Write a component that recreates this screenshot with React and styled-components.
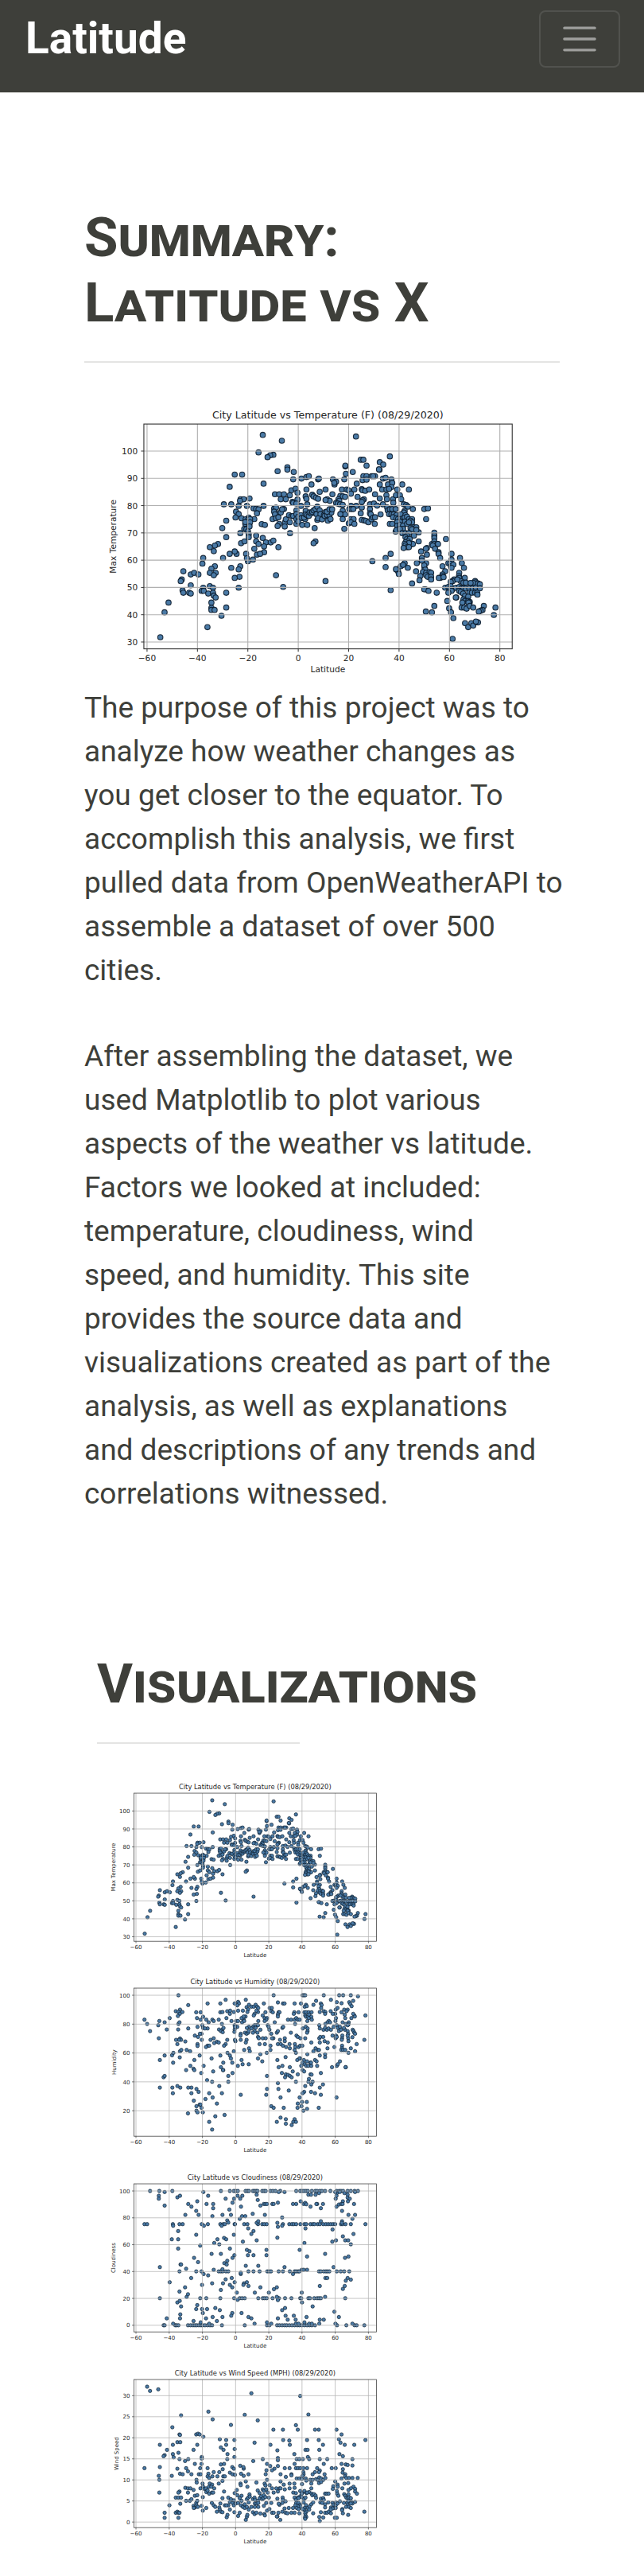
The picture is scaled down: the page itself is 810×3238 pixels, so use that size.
import React from "react";
import styled, { createGlobalStyle } from "styled-components";

const GlobalStyle = createGlobalStyle`
  * { box-sizing: border-box; }
  body {
    margin: 0;
    background: #fff;
    color: #3e3f3a;
    font-family: Roboto, "Liberation Sans", sans-serif;
    font-size: 37px;
    line-height: 55px;
  }
`;

const Navbar = styled.header`
  display: flex;
  align-items: flex-start;
  justify-content: space-between;
  padding: 13px 30px 31px 32px;
  background: #3e3f3a;
  border-bottom: 1px solid #dfdfdc;
`;

const Brand = styled.a`
  color: #fff;
  font-size: 55px;
  font-weight: 700;
  line-height: 70px;
  text-decoration: none;
`;

const Toggler = styled.button`
  display: flex;
  align-items: center;
  justify-content: center;
  width: 102px;
  height: 72px;
  padding: 0;
  background: transparent;
  border: 2px solid rgba(255, 255, 255, 0.1);
  border-radius: 8px;
  cursor: pointer;
`;

const Main = styled.main`
  padding: 141px 106px 34px;
`;

const Section = styled.section`
  margin-bottom: ${(p) => (p.$last ? 0 : 171)}px;
  padding-left: ${(p) => (p.$inset ? 16 : 0)}px;
`;

const Heading = styled.h1`
  margin: 0;
  font-size: 69px;
  font-weight: 700;
  font-variant: small-caps;
  line-height: 82px;
`;

const Rule = styled.hr`
  width: ${(p) => (p.$short ? "255px" : "auto")};
  max-width: 100%;
  height: 2px;
  margin: 32px 0 33px;
  border: 0;
  background: #e4e4e3;
`;

const Paragraph = styled.p`
  margin: 0 -6px ${(p) => (p.$last ? 0 : 53)}px 0;
`;

const Gallery = styled.div`
  display: flex;
  flex-direction: column;
  gap: 5px;
  width: 394px;
  max-width: 100%;
  margin-left: -3px;
`;

const ChartLink = styled.a`
  display: block;
  color: inherit;
`;

const Figure = styled.div`
  margin-bottom: 7px;
`;

const Plot = styled.svg`
  display: block;
  width: 100%;
  height: auto;
  font-family: "DejaVu Sans", sans-serif;
  fill: #262626;
`;

const pairs = (text) => text.trim().split(/\s+/).map((pair) => pair.split(",").map(Number));
const row = (y, xs) => xs.trim().split(/\s+/).map((x) => [Number(x), y]);

const WEST = pairs(`
485,81 557,103 469,147 525,156 513,158 503,165 578,203 578,212 541,218 602,221 379,231 407,231 360,277 488,265 600,249 631,246 650,240 659,237 694,249 697,246 669,268 593,290 609,284 650,287 616,299 700,296 722,287 531,305 547,305 565,305 587,309 553,324 572,324 647,313 650,322 672,307 677,313 686,318 694,322 616,325 597,334 600,338 612,340 338,343 366,343 394,349 401,324 413,324 435,321 399,330 425,349 488,349 629,349 653,343
384,371 394,380 382,393 347,405 332,433 347,467 450,358 460,360 469,362 463,377 453,399 432,393 405,396 420,400 430,401 437,399 419,417 434,420 415,436 423,437 429,445 400,452 432,456 432,467 419,410 437,411 435,427 481,418 493,421 588,452 681,433 684,483 677,490 528,359 535,356 528,371 541,380 531,381 553,374 565,361 558,362 522,399 535,396 544,392 547,417 541,425 569,411 572,400 568,427 587,411 584,384 594,388 600,387
612,366 612,380 612,399 619,390 629,384 631,395 634,421 653,421 612,417 619,408 645,399 641,393 647,368 647,381 653,384 659,387 662,374 669,377 672,372 677,366 684,361 688,380 691,352 700,366 703,380 691,402 694,396 709,400 716,384 722,372 719,387 728,384 731,405 737,384 741,399 744,374 728,371 737,362 747,362 728,324 738,330 722,327
403,490 416,483 460,461 460,483 469,493 485,470 497,487 515,487 525,480 490,502 544,505 453,511 490,524 463,533 475,530 448,552 429,558 422,530 425,547 386,530 379,521 360,530 335,546 316,493 304,499 285,505 300,520 260,546 257,567 304,577 291,586 366,583 400,577 394,589 397,617 379,621 307,602 285,602 300,611 185,596 213,608 226,602 242,608 179,627 175,633 213,649
182,668 185,677 207,677 213,680 260,658 254,670 262,670 285,652 297,658 279,680 297,677 300,688 307,695 347,677 394,658 129,714 114,751 98,845 276,807 291,714 291,734 291,742 303,742 347,733 329,764 535,611 562,655 722,633
`);

const EAST = pairs(`
147,87 275,162 165,175 175,175 187,197 237,184 250,193 236,213 234,211 107,200 107,197 135,221 109,228 103,249 60,249 66,268 72,257 65,262 150,265 175,237 187,237 206,237 219,237 212,237 172,252 187,250 249,246 259,243 281,249 237,268 268,268 284,262 322,268 281,278 347,287 303,287 94,287 112,287 119,290 141,287 128,303 169,286 172,290 182,292 197,287 246,287 262,287 272,285 58,305 88,311 97,313 106,315 81,324 84,330 153,315 219,305 237,321
177,324 172,328 169,334 262,309 264,324 287,324 298,309 313,309 318,324 288,337 200,343 215,340 227,348 249,343 328,343 337,346 343,352 72,338 78,340 87,343 97,345 128,349 148,349 169,355 122,361 130,361 137,361 200,361 165,377 200,377 203,381 240,381 97,367 94,381 106,381 97,399 88,380 128,399 138,399 120,415 128,411 141,417 103,436 169,402 178,404 185,406 194,411 206,400 212,393 219,392 218,417
265,355 267,366 275,362 284,361 297,361 331,368 328,374 362,361 405,361 419,358 412,399 272,380 281,381 290,381 300,384 316,381 334,384 287,392 300,396 306,399 316,399 325,396 331,393 340,390 347,399 359,399 353,405 359,411 322,408 331,409 313,409 303,411 275,417 284,417 303,424 313,421 325,424 340,417 347,411 366,430 375,430 353,433 359,437 325,436 297,446 300,440 313,436 384,449 375,440 322,452 334,452 347,452 340,461 366,461 334,467 340,474 350,474 343,483 334,487 359,493 362,493 384,483 347,490 331,493 334,499 340,505 347,505 327,508
443,450 443,461 443,470 487,474 434,493 443,483 443,493 455,493 457,493 437,499 446,511 459,524 459,530 465,546 415,508 411,511 393,521 415,533 396,546 278,530 259,546 259,580 209,558 377,565 412,565 396,556 331,565 316,577 325,572 343,583 300,590 306,596 298,588 309,606 374,596 406,583 405,574 409,590 400,599 412,602 425,599 431,602 412,611 418,617 431,617 431,627 390,614 387,630 359,642 278,667 409,664 405,664 421,670 452,677
508,530 508,552 540,546 496,565 503,567 506,577 515,571 508,583 547,565 555,583 474,577 484,596 474,608 474,614 465,621 460,621 478,618 537,602 536,614 537,621 558,621 518,627 512,633 505,636 543,633 553,639 562,639 530,627 597,633 599,638 590,640 608,642 615,645 580,640 484,658 496,655 505,652 512,664 503,664 525,658 537,655 545,660 553,660 562,661 575,660 588,660 600,658 615,660 508,670 496,677 537,670 543,674 552,680 575,677 585,677 597,677 605,677 606,684
526,695 524,695 559,689 571,692 553,702 559,708 549,714 571,708 577,712 575,717 572,714 492,708 546,733 556,733 565,737 577,727 590,733 630,727 625,742 618,745 611,748 674,733 668,761 499,736 506,751 515,773 443,727 411,748 434,751 559,792 571,807 583,792 590,801 603,788 608,789 600,786 512,851
`);

const TEMPERATURE_POINTS = [...WEST, ...EAST.map(([x, y]) => [x + 690, y])].map(([x, y]) => [
  562.5 + (x - 619) * 0.6576,
  167 + (y - 142) * 0.6574,
]);

const HUMIDITY_POINTS = pairs(`
347,127 706,127 815,127 820,127 825,127 895,127 953,127 968,127 997,127 1024,131 922,144 525,144 601,144 866,148 1006,148 457,158 505,158 384,164 353,181 337,187 347,190 362,190 352,197 345,205 314,213 347,235 351,229 346,256 303,256 295,229 275,224 271,240 219,219 229,235 240,262 273,289 384,252 414,191 431,191 417,213 431,219 440,208 452,219 461,229 419,246 437,240 440,250 457,252 447,252 409,279 434,272 428,272 421,284 435,295 475,219 480,224 499,219 511,235 528,213 505,191 513,190 531,187 541,197 542,185 556,190
547,224 559,240 565,224 572,224 559,158 572,152 575,158 569,165 572,185 590,185 604,172 613,163 610,180 622,170 631,170 638,163 644,170 648,175 600,207 593,219 587,229 595,224 585,213 593,207 634,197 631,203 647,190 641,185 607,190 669,158 722,154 741,158 747,158 785,158 809,158 828,163 823,170 831,168 856,163 884,158 887,164 944,153 962,157 991,153 995,160 1000,168 940,181 947,175 938,197 972,181 985,181 981,187 962,191 974,200 885,175 880,190 895,187 901,190 900,197 921,187 929,197
691,175 699,175 697,187 703,191 675,191 665,203 672,213 681,213 678,219 672,224 725,191 728,191 722,199 722,207 784,191 782,197 800,191 822,191 829,191 838,191 849,191 825,203 828,208 835,208 840,200 848,208 838,213 850,219 833,224 710,229 760,219 772,219 785,219 791,213 797,219 804,219 787,235 878,240 914,224 909,229 901,235 919,229 941,213 939,224 976,213 999,213 1010,203 1012,207 1006,197 1052,203 966,229 978,235 989,229 988,237
500,256 513,256 517,250 507,262 514,266 559,256 558,265 569,246 560,246 613,246 628,246 634,240 641,240 647,240 622,252 638,250 648,224 656,257 634,262 628,268 645,268 598,268 604,272 610,268 582,272 581,279 605,250 612,262 684,240 687,246 690,257 697,272 718,268 722,262 739,250 742,246 771,268 816,252 827,246 834,252 834,262 832,268 880,252 894,257 900,250 907,257 913,252 922,257 932,246 944,240 948,250 956,246 952,262 960,257 975,257 971,250 985,262 987,272 1004,257 1007,262 1010,268 1013,272 1003,285 985,240 928,279 941,279 940,289 944,284 965,279 964,289 963,295 987,289 985,279
480,289 468,295 492,302 499,305 482,307 531,295 525,311 519,317 457,317 463,317 451,322 419,311 419,318 373,301 353,290 357,295 349,295 338,295 343,311 353,338 358,333 378,333 391,338 352,361 323,353 328,344 327,381 295,354 277,371 427,354 472,365 505,354 532,344 541,354 545,365 556,338 562,300 560,295 582,295 604,295 601,305 595,333 613,327 616,338 647,284 665,289 676,289 650,289 653,311 673,311 694,317 694,333 680,344 656,349 647,365 663,376 705,289 700,289 730,295 748,289 748,300 722,311 733,311 741,317 753,322 766,311 767,327 786,311 800,322 806,317 814,317 788,322 785,333 790,344 792,279 797,284 807,289 825,289 848,305 878,289 882,284 893,284 880,305 898,300 910,305 864,327 872,333 856,338 877,333 909,327 935,322 964,317 964,327 961,333 968,333 976,333 988,344 997,327 1013,338 1019,311 1048,295 988,300
880,354 833,349 900,349 900,360 806,365 803,365 795,371 820,371 832,376 845,381 862,371 868,376 815,381 823,387 829,393 837,393 848,393 870,393 810,393 847,381 751,360 720,371 725,398 739,393 767,398 778,414 797,425 815,409 821,414 737,420 752,425 760,427 767,431 774,436 749,436 790,453 845,425 849,426 839,442 837,453 853,453 848,463 825,469 821,491 815,496 847,491 862,496 892,463 880,475 884,502 884,420 926,398 944,393 948,387 956,376 978,398 977,398 943,512 876,551
722,458 724,480 763,486 732,512 697,545 706,551 744,551 804,512 813,529 797,535 831,529 811,545 796,551 832,555 818,562 732,588 718,604 752,594 752,611 785,594 780,604 790,604 774,616
585,371 589,387 612,387 571,393 550,381 516,381 507,398 516,409 515,409 551,420 535,431 535,453 501,469 511,496 492,535 521,578 486,583 463,604 474,633 582,502 681,431 681,480 678,502 442,393 433,420 407,371 392,393 404,404 407,409 376,409 478,414 455,447 474,453 463,496 476,512 449,518 405,524 423,491 415,480 396,475 384,475 396,496 354,475 343,469 324,475 326,496 277,475 291,436 295,431 427,539 430,539 415,545 434,551 415,562 419,568 439,568 383,572
`);

const CLOUDINESS_POINTS = [
  ...row(127, "240 275 324 507 541 556 563 571 600 607 613 628 634 640 645 663 670 676 694 703 713 731 791 806 813 820 828 835 850 863 870 880 888 900 920 944 953 960 968 985 997 1011 1024"),
  ...row(252, "219 229 326 351 363 435 458 505 516 522 559 560 595 607 647 663 671 680 741 765 775 782 791 807 822 829 845 854 860 872 880 893 903 912 921 930 938 960 966 977 997 1052"),
  ...row(430, "351 414 434 499 507 514 526 535 611 630 653 682 689 696 725 741 767 785 791 798 803 877 884 895 903 909 916 944 959 972 991"),
  ...row(531, "277 429 452 505 557 578 587 597 648 665 672 680 702 722 726 749 773 806 810 837 843 859 870 877 884 976"),
  ...row(633, "291 295 335 340 347 383 393 402 409 416 424 432 438 447 457 466 474 511 597 681 690 719 728 738 747 755 765 775 785 795 803 812 822 832 841 850 862 945 980 1011 1019 1048"),
  ...pairs(`
295,131 441,131 273,145 273,156 343,151 353,145 459,145 525,156 557,156 570,145 580,156 588,145 642,141 646,161 725,131 747,131 837,141 847,141 864,141 877,135 944,135 940,156 943,145 973,135 985,141 985,152 993,156 967,166 986,166 938,131 955,131 1013,131 418,166 384,176 453,176 478,176 295,182 396,186 478,192 414,202 551,171 583,186 656,182 669,176 675,176 681,176 701,176 706,176 722,171 779,176 791,176 808,166 819,176 825,172 829,177 845,186 870,176 892,176 867,176 884,192 943,186 952,178 961,176 966,176 1009,176 964,202
373,217 423,217 475,222 513,217 545,217 539,197 627,213 673,217 587,222 599,222 578,232 738,227 988,217 1013,217 1003,232 531,238 535,246 642,247 648,241 720,247 884,241 964,241 963,247 327,258 443,258 510,258 722,262 738,258 610,268 826,268 928,272 346,278 414,292 556,292 630,278 622,289 1007,289 322,309 346,309 494,309 519,304 527,309 482,323 501,328 590,318 642,313 720,303 967,298 941,313 927,318 976,313 987,313 997,328 822,323
429,333 346,344 541,344 605,349 615,354 679,349 804,349 472,364 507,364 609,369 630,369 679,369 558,369 900,364 551,379 832,374 975,379 988,374 406,379 421,395 531,390 520,399 529,404 355,404 357,404 277,414 376,420 601,409 648,409 747,414 932,414 480,424 513,422 832,424 812,424 819,424
442,440 459,445 582,440 582,435 779,440 395,455 548,455 525,460 474,475 515,475 436,481 559,471 594,475 605,471 611,485 592,481 541,481 550,490 314,471 372,490 351,506 507,500 567,510 656,490 718,490 707,497 635,510 688,510 812,510 901,455 908,455 985,455 978,465 997,461 974,485 967,496 880,485 378,526 383,516
900,526 718,526 570,537 722,538 813,547 343,547 352,541 357,562 418,557 414,572 436,572 455,572 439,587 486,568 503,576 749,568 738,576 853,562 935,582 354,592 353,607 303,607 550,587 546,597 585,587 451,607 476,602 513,602 611,602 622,607 492,617 404,617 751,597 782,597 722,607 759,612 789,612 830,602 952,602 880,612 895,612 431,622 327,627 463,627 634,627 681,622 697,627 1003,627 939,627 822,622 790,627 800,627 840,627 850,627 878,627
`),
];

const WIND_POINTS = pairs(`
229,127 240,143 271,137 622,152 806,162 460,221 357,235 476,250 597,233 646,254 837,232 545,271 324,280 790,272 705,289 741,289 797,289 862,289 876,289 943,289 351,307 353,309 414,307 421,304 427,307 962,307 441,316 503,325 527,328 558,328 742,328 765,330 832,328 876,328 952,325 958,338 1052,328 343,336 354,336 277,346 326,346 418,346 527,346 634,338 694,346 767,346 892,346 974,346 1010,346 507,356 517,365 304,365 404,365 559,362 720,367 826,365 834,365 878,365 347,376 326,381 329,393 295,385 291,389 532,381 558,392 784,381 954,381 967,389 835,392
435,392 435,398 351,400 384,400 372,407 531,400 665,400 722,396 722,404 793,400 803,400 816,400 840,400 880,400 908,400 1003,400 629,407 409,418 434,418 507,420 519,418 681,418 785,418 895,418 962,418 978,420 1003,424 985,422 219,434 277,430 343,436 376,434 383,446 429,434 457,434 514,438 550,430 556,436 580,425 593,436 592,430 693,426 722,426 709,436 700,442 679,442 748,434 766,434 790,434 798,434 807,434 818,434 832,434 870,434 925,434 940,434 967,438 880,443
353,455 363,457 396,457 424,457 431,457 460,455 480,449 501,449 541,451 551,457 560,459 583,455 611,457 593,463 676,457 732,457 773,457 773,461 818,449 819,457 853,457 862,449 877,449 898,457 966,451 976,457 322,463 273,463 275,478 415,478 457,465 463,471 475,465 494,465 516,465 522,465 513,482 601,484 641,488 416,488 438,492 465,492 474,496 499,492 581,492 582,498 681,478 732,484 752,467 793,473 803,473 812,475 815,463 827,473 829,481 844,478 853,478 866,475 872,478 878,469 885,473 893,478 901,471 877,490 885,486
938,484 962,473 975,465 980,471 990,471 1003,471 1023,471 744,496 766,492 784,492 813,494 848,492 672,492 675,499 691,498 947,496 973,492 987,490 931,502 948,504 965,510 1007,504 997,510 607,504 373,508 383,510 392,510 404,516 430,510 440,504 445,512 451,510 462,504 471,504 482,510 275,526 351,522 347,526 383,526 452,524 457,518 463,530 473,526 478,526 519,522 559,528 567,516 569,536 585,538 646,518 653,528 665,514 669,520 678,514 684,526 700,510 706,526 716,510 722,522 728,510 732,510 748,514 766,510 785,508 780,526 790,528 806,520 815,526 822,520 830,528 840,524 848,510 849,530 806,540 812,530 832,526 852,536 858,532 864,537 866,546 900,530 906,530 913,530 929,512 944,520 946,530 950,538 972,532 976,538 988,516 1013,512 1013,522 1020,530 988,532
409,538 418,536 439,543 337,545 347,545 357,545 376,557 390,557 396,551 414,565 418,557 354,568 313,574 404,576 409,582 415,574 420,580 434,576 405,584 452,584 439,594 473,565 480,574 486,580 501,582 492,598 503,590 507,598 513,600 513,547 505,567 535,545 522,574 535,574 528,574 541,561 545,551 551,565 556,555 541,590 556,574 563,567 572,565 578,547 585,557 583,574 590,580 558,600 578,602 597,584 597,570 605,551 610,545 615,533 616,541 612,563 605,580 612,590 622,580 628,551 634,545 636,553 635,567 635,580 648,580 642,567 647,557 653,547 659,540 663,551 668,547 669,536 675,543 688,545 648,565 669,576 678,565 697,565
628,600 634,607 641,602 656,605 671,607 681,594 690,588 700,602 706,602 724,602 673,612 720,616 718,616 731,629 720,549 740,545 741,553 751,559 739,565 728,572 725,568 747,586 763,584 779,584 739,598 751,602 758,604 773,602 785,602 803,604 785,545 797,545 790,553 800,547 812,543 820,551 826,545 791,565 800,565 806,572 806,578 797,578 788,574 793,584 800,588 819,563 828,573 823,584 835,584 840,590 822,592 815,588 842,578 848,570 855,563 829,598 825,604 826,612 829,618 824,620 825,625 855,604
884,549 893,547 895,553 882,563 889,565 900,570 912,563 900,582 884,600 900,602 908,602 914,598 922,604 922,582 928,565 932,572 940,574 934,584 940,584 928,586 921,590 941,563 947,567 956,559 971,565 984,563 980,545 985,547 991,545 997,547 988,557 1000,561 1003,567 1013,561 997,567 985,574 979,580 990,580 997,584 965,588 964,592 967,604 987,610 1048,598 295,602 295,621 337,602 343,598 347,602 351,602 347,621 529,619 532,610 572,614 601,629 605,617 607,610 878,618 893,620 937,621 944,621 880,633
`);

const LATITUDE_TICKS = [-60, -40, -20, 0, 20, 40, 60, 80];

const ticks = (start, end, step, y0, unit) => {
  const list = [];
  for (let value = start; value <= end; value += step) {
    list.push({ value, y: y0 - (value - start) * unit });
  }
  return list;
};

const CHARTS = {
  temperature: {
    title: "City Latitude vs Temperature (F) (08/29/2020)",
    label: "Max Temperature",
    labelX: 110,
    points: TEMPERATURE_POINTS,
    ticks: ticks(30, 100, 10, 641, 6.771),
  },
  humidity: {
    title: "City Latitude vs Humidity (08/29/2020)",
    label: "Humidity",
    labelX: 112,
    points: HUMIDITY_POINTS,
    ticks: ticks(20, 100, 20, 562, 5.4375),
  },
  cloudiness: {
    title: "City Latitude vs Cloudiness (08/29/2020)",
    label: "Cloudiness",
    labelX: 110,
    points: CLOUDINESS_POINTS,
    ticks: ticks(0, 100, 20, 633, 5.06),
  },
  wind: {
    title: "City Latitude vs Wind Speed (MPH) (08/29/2020)",
    label: "Wind Speed",
    labelX: 122,
    points: WIND_POINTS,
    ticks: ticks(0, 30, 5, 637, 15.87),
  },
};

function ScatterChart({ chart }) {
  const xTicks = LATITUDE_TICKS.map((value) => ({ value, x: 562.5 + value * 6.26 }));
  return (
    <Plot viewBox="31 13 1181 722" role="img" aria-label={chart.title}>
      <g fill="#4a7aa6" stroke="#0b1b2b" strokeWidth="2.2" strokeOpacity="0.9">
        {chart.points.map(([x, y], i) => (
          <circle key={i} cx={x} cy={y} r="6.5" />
        ))}
      </g>
      <g stroke="#b0b0b0" strokeWidth="2.2">
        {xTicks.map((t) => (
          <line key={t.value} x1={t.x} x2={t.x} y1="100" y2="658" />
        ))}
        {chart.ticks.map((t) => (
          <line key={t.value} x1="179" x2="1094" y1={t.y} y2={t.y} />
        ))}
      </g>
      <rect x="179" y="100" width="915" height="558" fill="none" stroke="#333" strokeWidth="2.2" />
      <g stroke="#333" strokeWidth="2">
        {xTicks.map((t) => (
          <line key={t.value} x1={t.x} x2={t.x} y1="658" y2="665" />
        ))}
        {chart.ticks.map((t) => (
          <line key={t.value} x1="172" x2="179" y1={t.y} y2={t.y} />
        ))}
      </g>
      <g fontSize="21">
        <g textAnchor="middle">
          {xTicks.map((t) => (
            <text key={t.value} x={t.x} y="688">
              {String(t.value).replace("-", "\u2212")}
            </text>
          ))}
          <text x="636" y="716">Latitude</text>
          <text transform={`translate(${chart.labelX} 379) rotate(-90)`}>{chart.label}</text>
        </g>
        <g textAnchor="end">
          {chart.ticks.map((t) => (
            <text key={t.value} x="164" y={t.y + 8}>{t.value}</text>
          ))}
        </g>
      </g>
      <text x="636" y="86" fontSize="25" textAnchor="middle">{chart.title}</text>
    </Plot>
  );
}

function MenuIcon() {
  return (
    <svg width="52" height="52" viewBox="0 0 30 30" aria-hidden="true">
      <path
        d="M4 7h22M4 15h22M4 23h22"
        stroke="rgba(255,255,255,0.5)"
        strokeWidth="2"
        strokeLinecap="round"
        strokeMiterlimit="10"
      />
    </svg>
  );
}

export default function App() {
  return (
    <>
      <GlobalStyle />
      <Navbar>
        <Brand href="#">Latitude</Brand>
        <Toggler type="button" aria-label="Toggle navigation">
          <MenuIcon />
        </Toggler>
      </Navbar>
      <Main>
        <Section>
          <Heading>
            Summary:
            <br />
            Latitude vs X
          </Heading>
          <Rule />
          <Figure>
            <ScatterChart chart={CHARTS.temperature} />
          </Figure>
          <Paragraph>
            The purpose of this project was to analyze how weather changes as you get closer to
            the equator. To accomplish this analysis, we first pulled data from OpenWeatherAPI to
            assemble a dataset of over 500 cities.
          </Paragraph>
          <Paragraph $last>
            After assembling the dataset, we used Matplotlib to plot various aspects of the
            weather vs latitude. Factors we looked at included: temperature, cloudiness, wind
            speed, and humidity. This site provides the source data and visualizations created as
            part of the analysis, as well as explanations and&nbsp;descriptions of any trends and
            correlations witnessed.
          </Paragraph>
        </Section>
        <Section $last $inset>
          <Heading as="h2">Visualizations</Heading>
          <Rule $short />
          <Gallery>
            {Object.entries(CHARTS).map(([name, chart]) => (
              <ChartLink key={name} href={`#${name}`}>
                <ScatterChart chart={chart} />
              </ChartLink>
            ))}
          </Gallery>
        </Section>
      </Main>
    </>
  );
}
